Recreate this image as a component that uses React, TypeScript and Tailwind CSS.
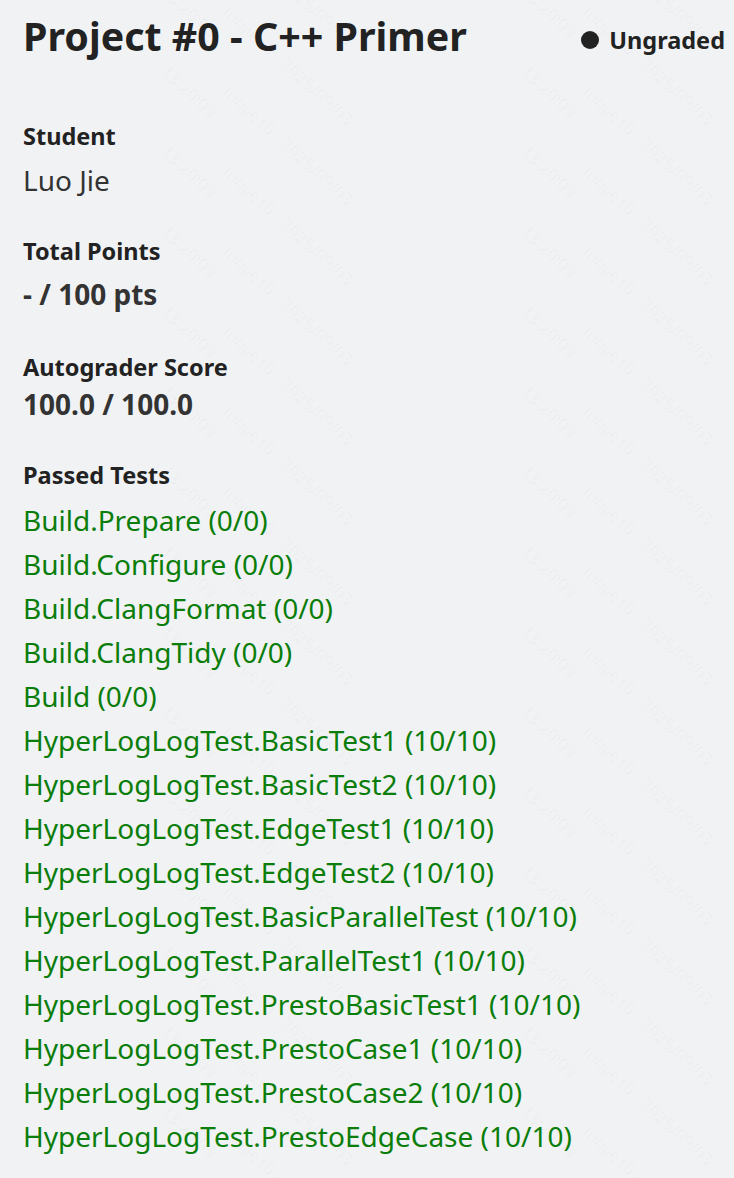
const tests = [
  'Build.Prepare (0/0)',
  'Build.Configure (0/0)',
  'Build.ClangFormat (0/0)',
  'Build.ClangTidy (0/0)',
  'Build (0/0)',
  'HyperLogLogTest.BasicTest1 (10/10)',
  'HyperLogLogTest.BasicTest2 (10/10)',
  'HyperLogLogTest.EdgeTest1 (10/10)',
  'HyperLogLogTest.EdgeTest2 (10/10)',
  'HyperLogLogTest.BasicParallelTest (10/10)',
  'HyperLogLogTest.ParallelTest1 (10/10)',
  'HyperLogLogTest.PrestoBasicTest1 (10/10)',
  'HyperLogLogTest.PrestoCase1 (10/10)',
  'HyperLogLogTest.PrestoCase2 (10/10)',
  'HyperLogLogTest.PrestoEdgeCase (10/10)',
]

// faint user watermark tiled over the page
function Watermark() {
  const cols = [-170, 190, 550]
  const rows = Array.from({ length: 17 }, (_, i) => i * 80 - 120)
  return (
    <div className="pointer-events-none absolute inset-0 overflow-hidden select-none">
      {cols.map((x) =>
        rows.map((y) => (
          <div
            key={`${x}-${y}`}
            className="absolute origin-top-left rotate-[42deg] whitespace-nowrap text-[17px] leading-[26px] text-black/[0.03]"
            style={{ left: x, top: y }}
          >
            <div className="pl-[60px]">luojie10 - 2025/09/03</div>
            <div>13:20:03</div>
          </div>
        ))
      )}
    </div>
  )
}

export default function App() {
  return (
    <div className="relative min-h-[1178px] overflow-hidden bg-[#f1f2f4] font-['Noto_Sans',sans-serif] text-[#222]">
      <Watermark />

      <div className="relative pl-[23px] pr-[9px] pt-[8px]">
        {/* Header */}
        <div className="flex items-start justify-between">
          <h1 className="text-[39.4px] font-bold leading-[56px]">Project #0 - C++ Primer</h1>
          <div className="flex items-center gap-[10px] pt-[17px] text-[23.5px] font-bold leading-[30px]">
            <span className="h-[18px] w-[18px] rounded-full bg-[#222]" />
            <span>Ungraded</span>
          </div>
        </div>

        {/* Student */}
        <div className="mt-[57px]">
          <h3 className="text-[23.5px] font-bold leading-[30px]">Student</h3>
          <div className="mt-[11px] text-[28px] leading-[36px] text-[#333]">Luo Jie</div>
        </div>

        {/* Total Points */}
        <div className="mt-[38px]">
          <h3 className="text-[23.5px] font-bold leading-[30px]">Total Points</h3>
          <div className="mt-[10px] text-[28px] font-bold leading-[36px] text-[#333]">
            - / 100 pts
          </div>
        </div>

        {/* Autograder */}
        <div className="mt-[40px]">
          <h3 className="text-[23.5px] font-bold leading-[30px]">Autograder Score</h3>
          <div className="mt-[4px] text-[28px] font-bold leading-[36px] text-[#333]">
            100.0 / 100.0
          </div>
        </div>

        {/* Passed Tests */}
        <div className="mt-[38px]">
          <h3 className="text-[23.5px] font-bold leading-[30px]">Passed Tests</h3>
          <ul className="mt-[8px]">
            {tests.map((t) => (
              <li key={t} className="text-[28px] leading-[44px] text-[#0a7d0a]">
                {t}
              </li>
            ))}
          </ul>
        </div>
      </div>
    </div>
  )
}
